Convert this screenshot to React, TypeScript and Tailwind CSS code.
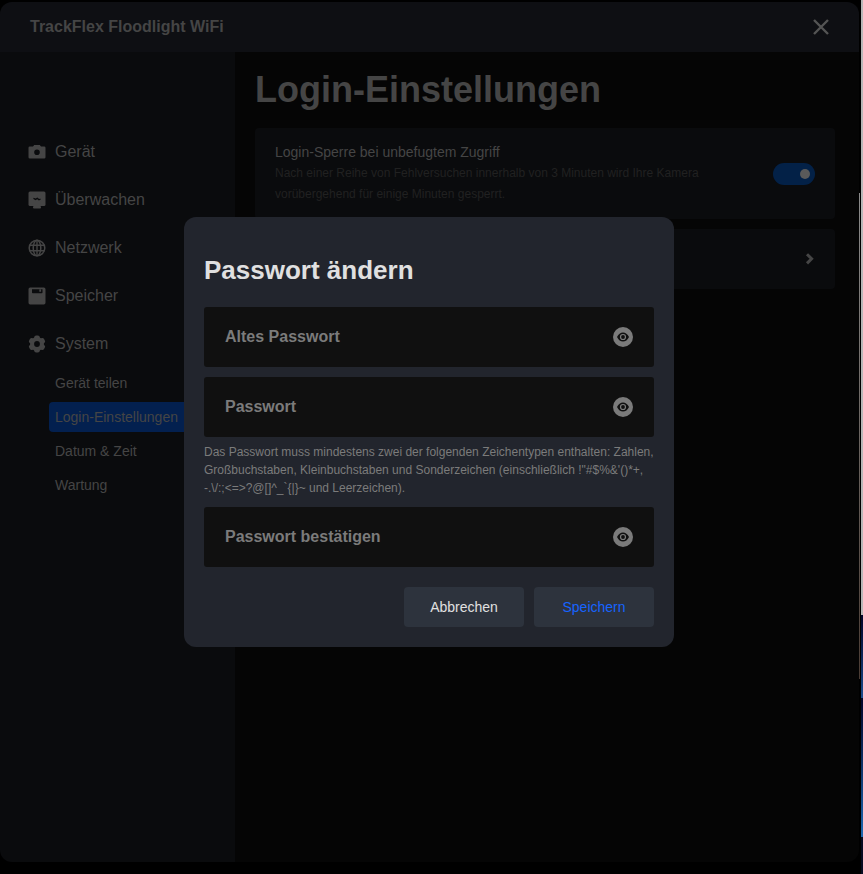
import React from "react";

const HELP_LINES = [
  "Das Passwort muss mindestens zwei der folgenden Zeichentypen enthalten: Zahlen,",
  "Großbuchstaben, Kleinbuchstaben und Sonderzeichen (einschließlich !\"#$%&'()*+,",
  "-.\\/:;<=>?@[]^_`{|}~ und Leerzeichen).",
];

function CameraIcon() {
  return (
    <svg width="18" height="18" viewBox="0 0 18 18" fill="currentColor" aria-hidden="true">
      <path
        fillRule="evenodd"
        d="M6.2 2h5.6l1.2 1.4h3.2q1.3 0 1.3 1.3v9.500q0 1.300-1.300 1.300H1.800q-1.300 0-1.300-1.300V4.700q0-1.300 1.300-1.300H5zM9 6.500a2.800 2.800 0 1 0 0 5.600A2.800 2.800 0 0 0 9 6.500z"
      />
    </svg>
  );
}

function MonitorIcon() {
  return (
    <svg width="18" height="18" viewBox="0 0 18 18" fill="currentColor" aria-hidden="true">
      <rect x="0.5" y="0.5" width="17" height="14.5" rx="1.5" />
      <rect x="5" y="15" width="8" height="2.5" rx="1" />
      <path d="M5.5 7.2l2 1.2 1.8-1 1.7 1.4 1.5-.8" stroke="#0a0b0d" strokeWidth="1.3" fill="none" />
    </svg>
  );
}

function GlobeIcon() {
  return (
    <svg width="18" height="18" viewBox="0 0 18 18" fill="none" stroke="currentColor" strokeWidth="1.5" aria-hidden="true">
      <circle cx="9" cy="9" r="7.8" />
      <ellipse cx="9" cy="9" rx="3.8" ry="7.8" />
      <path d="M9 1v16M1.500 6.300h15M1.500 11.700h15" strokeWidth="1.4" />
    </svg>
  );
}

function StorageIcon() {
  return (
    <svg width="18" height="18" viewBox="0 0 18 18" fill="currentColor" aria-hidden="true">
      <path
        fillRule="evenodd"
        d="M2.2.5h13.6q1.7 0 1.7 1.7v13.6q0 1.7-1.7 1.7H2.2q-1.7 0-1.7-1.7V2.2q0-1.7 1.7-1.7zM4 2.200v3.200q0 .8.8.8h8.900q.8 0 .8-.8V2.200zM11.300 2.600h1.800v2.200h-1.800z"
      />
    </svg>
  );
}

function GearIcon() {
  return (
    <svg width="18" height="18" viewBox="0 0 18 18" aria-hidden="true">
      <g fill="currentColor">
        <circle cx="9" cy="9" r="7" />
        <rect x="6.2" y="0.4" width="5.6" height="17.2" rx="2" />
        <rect x="6.2" y="0.4" width="5.6" height="17.2" rx="2" transform="rotate(60 9 9)" />
        <rect x="6.2" y="0.4" width="5.6" height="17.2" rx="2" transform="rotate(120 9 9)" />
      </g>
      <circle cx="9" cy="9" r="2.9" fill="#0a0b0d" />
    </svg>
  );
}

function EyeIcon() {
  return (
    <svg width="20" height="20" viewBox="0 0 20 20" aria-hidden="true">
      <circle cx="10" cy="10" r="10" fill="#7b7b7b" />
      <path d="M4 10Q6.300 5.400 10 5.400T16 10Q13.700 14.600 10 14.600T4 10z" fill="#101010" />
      <circle cx="10" cy="10" r="3.100" fill="#7b7b7b" />
      <circle cx="10" cy="10" r="1.900" fill="#101010" />
    </svg>
  );
}

const NAV = [
  { label: "Gerät", Icon: CameraIcon },
  { label: "Überwachen", Icon: MonitorIcon },
  { label: "Netzwerk", Icon: GlobeIcon },
  { label: "Speicher", Icon: StorageIcon },
  { label: "System", Icon: GearIcon },
];

const SUB_NAV = ["Gerät teilen", "Login-Einstellungen", "Datum & Zeit", "Wartung"];

function PasswordField({ label }: { label: string }) {
  return (
    <div className="flex h-[60px] items-center rounded-[3px] bg-[#101010] px-[21px]">
      <input
        type="password"
        aria-label={label}
        placeholder={label}
        className="h-full min-w-0 flex-1 bg-transparent text-[16px] font-bold text-[#dddddd] outline-none placeholder:text-[#7b7b7b]"
      />
      <button type="button" aria-label="Passwort anzeigen" className="shrink-0 rounded-full">
        <EyeIcon />
      </button>
    </div>
  );
}

function Sidebar() {
  return (
    <nav className="w-[235px] shrink-0 bg-[#0a0b0d] pt-19 text-[#454545]">
      <ul>
        {NAV.map(({ label, Icon }) => (
          <li key={label}>
            <a href="#" className="flex h-12 items-center gap-[9px] pl-7 text-[16px]">
              <Icon />
              {label}
            </a>
          </li>
        ))}
      </ul>
      <ul className="flex flex-col gap-1 pr-2.5 pl-[49px] text-[14px]">
        {SUB_NAV.map((label) => (
          <li key={label}>
            <a
              href="#"
              className={
                label === "Login-Einstellungen"
                  ? "block rounded bg-[#03204f] pl-1.5 leading-[30px]"
                  : "block pl-1.5 leading-[30px]"
              }
            >
              {label}
            </a>
          </li>
        ))}
      </ul>
    </nav>
  );
}

function Content() {
  return (
    <main className="min-w-0 flex-1 bg-[#050505] pr-6 pl-5">
      <h1 className="text-[36px] leading-[76px] font-bold text-[#454545]">Login-Einstellungen</h1>
      <section className="flex items-center rounded bg-[#0a0b0d] px-5 py-3.5">
        <div className="min-w-0 flex-1 leading-[21px]">
          <label htmlFor="lock" className="block text-[14px] text-[#454545]">
            Login-Sperre bei unbefugtem Zugriff
          </label>
          <p className="text-[12px] leading-[21px] text-[#212121]">
            Nach einer Reihe von Fehlversuchen innerhalb von 3 Minuten wird Ihre Kamera vorübergehend für einige Minuten
            gesperrt.
          </p>
        </div>
        <input
          id="lock"
          type="checkbox"
          role="switch"
          defaultChecked
          className="flex h-[22px] w-[42px] shrink-0 appearance-none items-center rounded-full bg-[#032147] px-[5px] before:size-2.5 before:rounded-full before:bg-[#5a5a5a] checked:justify-end"
        />
      </section>
      <button
        type="button"
        aria-label="Passwort ändern"
        className="mt-2.5 flex h-[60px] w-full items-center justify-end rounded bg-[#0a0b0d] pr-5 text-[#454545]"
      >
        <svg width="10" height="12" viewBox="0 0 10 12" fill="none" stroke="currentColor" strokeWidth="3" aria-hidden="true">
          <path d="M2 1.200L6.600 5.800 2 10.400" />
        </svg>
      </button>
    </main>
  );
}

function PasswordDialog() {
  return (
    <div className="absolute inset-0 flex items-center justify-center pr-px">
      <form role="dialog" aria-labelledby="dialog-title" className="w-[490px] rounded-xl bg-[#22252d] p-5">
        <h2 id="dialog-title" className="mb-1 text-[26px] leading-[66px] font-bold text-[#e0e0e0]">
          Passwort ändern
        </h2>
        <div className="flex flex-col gap-2.5">
          <PasswordField label="Altes Passwort" />
          <div>
            <PasswordField label="Passwort" />
            <p className="mt-1.5 text-[12px] leading-[18px] whitespace-nowrap text-[#7b7b7b]">
              {HELP_LINES.map((line) => (
                <span key={line} className="block">
                  {line}
                </span>
              ))}
            </p>
          </div>
          <PasswordField label="Passwort bestätigen" />
        </div>
        <div className="mt-5 flex justify-end gap-2.5 text-[14px]">
          <button type="button" className="h-10 w-[120px] rounded bg-[#2d333d] text-[#e0e0e0]">
            Abbrechen
          </button>
          <button type="button" className="h-10 w-[120px] rounded bg-[#2d333d] text-[#1664ff]">
            Speichern
          </button>
        </div>
      </form>
    </div>
  );
}

function DesktopEdge() {
  return (
    <div className="flex shrink-0" aria-hidden="true">
      <div className="mt-[193px] mr-px h-[486px] w-px bg-linear-to-b from-[#8a8a8a] via-[#6a6460] to-[#4a3c34]" />
      <div className="flex w-0.5 flex-col">
        <div className="h-[615px] bg-[#b8b8b8]" />
        <div className="h-[83px] bg-linear-to-b from-[#03062a] to-[#1c4c8c]" />
        <div className="h-[139px] bg-linear-to-b from-[#03062a] to-[#1f68b0]" />
        <div className="flex-1 bg-[#070b22]" />
      </div>
    </div>
  );
}

export default function App() {
  return (
    <div className="flex min-h-screen bg-black font-['Liberation_Sans',Arial,sans-serif]">
      <div className="flex min-w-0 flex-1 pt-0.5 pb-3">
        <div className="relative flex min-w-0 flex-1 flex-col overflow-hidden rounded-xl">
          <header className="flex h-[50px] shrink-0 items-center justify-between bg-[#0e0f13] px-[30px] text-[#454545]">
            <div className="text-[16px] font-bold">TrackFlex Floodlight WiFi</div>
            <button type="button" aria-label="Schließen">
              <svg width="16" height="16" viewBox="0 0 16 16" fill="none" stroke="#545454" strokeWidth="2.4" aria-hidden="true">
                <path d="M1 1l14 14M15 1L1 15" />
              </svg>
            </button>
          </header>
          <div className="flex flex-1">
            <Sidebar />
            <Content />
          </div>
          <PasswordDialog />
        </div>
      </div>
      <DesktopEdge />
    </div>
  );
}
